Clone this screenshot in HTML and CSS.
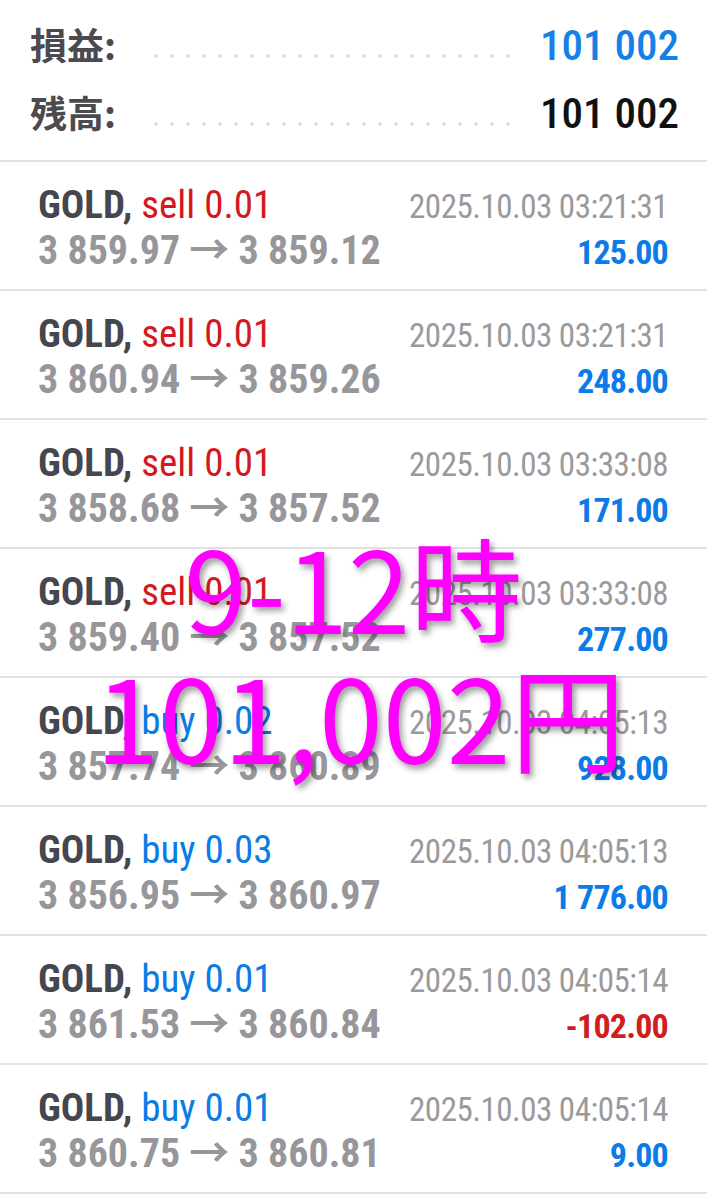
FILE: index.html
```html
<!DOCTYPE html>
<html>
<head>
    <title>History</title>
    <link rel="stylesheet" href="styles.css">
</head>
<body>
    <div class="page">
        <div class="summary">
            <div class="sum-row">
                <span class="sum-label">損益:</span>
                <span class="leader"></span>
                <span class="sum-value plus">101 002</span>
            </div>
            <div class="sum-row">
                <span class="sum-label">残高:</span>
                <span class="leader"></span>
                <span class="sum-value">101 002</span>
            </div>
        </div>

        <ul class="deals">
            <li class="deal">
                <div class="deal-line">
                    <span class="deal-name"><b>GOLD,</b> <span class="sell">sell 0.01</span></span>
                    <span class="deal-time">2025.10.03 03:21:31</span>
                </div>
                <div class="deal-line">
                    <span class="deal-prices">3 859.97 &rarr; 3 859.12</span>
                    <span class="deal-pnl plus">125.00</span>
                </div>
            </li>
            <li class="deal">
                <div class="deal-line">
                    <span class="deal-name"><b>GOLD,</b> <span class="sell">sell 0.01</span></span>
                    <span class="deal-time">2025.10.03 03:21:31</span>
                </div>
                <div class="deal-line">
                    <span class="deal-prices">3 860.94 &rarr; 3 859.26</span>
                    <span class="deal-pnl plus">248.00</span>
                </div>
            </li>
            <li class="deal">
                <div class="deal-line">
                    <span class="deal-name"><b>GOLD,</b> <span class="sell">sell 0.01</span></span>
                    <span class="deal-time">2025.10.03 03:33:08</span>
                </div>
                <div class="deal-line">
                    <span class="deal-prices">3 858.68 &rarr; 3 857.52</span>
                    <span class="deal-pnl plus">171.00</span>
                </div>
            </li>
            <li class="deal">
                <div class="deal-line">
                    <span class="deal-name"><b>GOLD,</b> <span class="sell">sell 0.01</span></span>
                    <span class="deal-time">2025.10.03 03:33:08</span>
                </div>
                <div class="deal-line">
                    <span class="deal-prices">3 859.40 &rarr; 3 857.52</span>
                    <span class="deal-pnl plus">277.00</span>
                </div>
            </li>
            <li class="deal">
                <div class="deal-line">
                    <span class="deal-name"><b>GOLD,</b> <span class="buy">buy 0.02</span></span>
                    <span class="deal-time">2025.10.03 04:05:13</span>
                </div>
                <div class="deal-line">
                    <span class="deal-prices">3 857.74 &rarr; 3 860.89</span>
                    <span class="deal-pnl plus">928.00</span>
                </div>
            </li>
            <li class="deal">
                <div class="deal-line">
                    <span class="deal-name"><b>GOLD,</b> <span class="buy">buy 0.03</span></span>
                    <span class="deal-time">2025.10.03 04:05:13</span>
                </div>
                <div class="deal-line">
                    <span class="deal-prices">3 856.95 &rarr; 3 860.97</span>
                    <span class="deal-pnl plus">1 776.00</span>
                </div>
            </li>
            <li class="deal">
                <div class="deal-line">
                    <span class="deal-name"><b>GOLD,</b> <span class="buy">buy 0.01</span></span>
                    <span class="deal-time">2025.10.03 04:05:14</span>
                </div>
                <div class="deal-line">
                    <span class="deal-prices">3 861.53 &rarr; 3 860.84</span>
                    <span class="deal-pnl minus">-102.00</span>
                </div>
            </li>
            <li class="deal">
                <div class="deal-line">
                    <span class="deal-name"><b>GOLD,</b> <span class="buy">buy 0.01</span></span>
                    <span class="deal-time">2025.10.03 04:05:14</span>
                </div>
                <div class="deal-line">
                    <span class="deal-prices">3 860.75 &rarr; 3 860.81</span>
                    <span class="deal-pnl plus">9.00</span>
                </div>
            </li>
        </ul>

        <div class="stamp">
            <div>9-12時</div>
            <div class="stamp-big">101,002円</div>
        </div>
    </div>
</body>
</html>
```

FILE: styles.css
```css
body {
    margin: 0;
    background: #fff;
    font-family: "Roboto Condensed", Roboto, "Noto Sans CJK JP", sans-serif;
}
.page {
    position: relative;
    overflow: hidden;
}
.summary {
    padding: 10px 28px 14px 30px;
    border-bottom: 2px solid #e2e2e2;
}
.sum-row {
    display: flex;
    align-items: baseline;
    height: 68px;
    line-height: 68px;
}
.sum-label {
    font-family: "Noto Sans CJK JP", sans-serif;
    font-size: 37px;
    font-weight: bold;
    color: #4b4b4f;
}
.leader {
    flex: 1;
    align-self: stretch;
    margin: 0 18px 0 32px;
    background-image: radial-gradient(circle, #e0e0e0 1.6px, transparent 2px);
    background-size: 16px 8px;
    background-repeat: repeat-x;
    background-position: left 0 bottom 18px;
}
.sum-value {
    font-size: 43px;
    font-weight: 500;
    color: #111;
}
.sum-value.plus {
    color: #1580e6;
}

.deals {
    list-style: none;
    margin: 0;
    padding: 0;
}
.deal {
    padding: 21px 39px 16px 38px;
    border-bottom: 2px solid #e2e2e2;
}
.deal-line {
    display: flex;
    justify-content: space-between;
    align-items: baseline;
    height: 45px;
    line-height: 45px;
}
.deal-name {
    font-size: 39px;
}
.deal-name b {
    color: #46464e;
}
.sell {
    color: #d3191e;
}
.buy {
    color: #0b7be5;
}
.deal-time {
    font-size: 33px;
    letter-spacing: -0.5px;
    color: #9a9a9c;
}
.deal-prices {
    font-size: 40px;
    font-weight: bold;
    color: #97979b;
}
.deal-pnl {
    font-size: 34px;
    letter-spacing: -0.8px;
    font-weight: bold;
}
.deal-pnl.plus {
    color: #0b7be8;
}
.deal-pnl.minus {
    color: #d01d1d;
}

.stamp {
    position: absolute;
    top: 521px;
    left: 0;
    right: 0;
    text-align: center;
    font-family: "Noto Sans CJK JP", sans-serif;
    font-size: 112px;
    line-height: 129px;
    color: #ff00ff;
    text-shadow: 3px 4px 6px rgba(0, 0, 0, 0.4);
}
.stamp-big {
    font-size: 115px;
    padding-left: 14px;
}
```
